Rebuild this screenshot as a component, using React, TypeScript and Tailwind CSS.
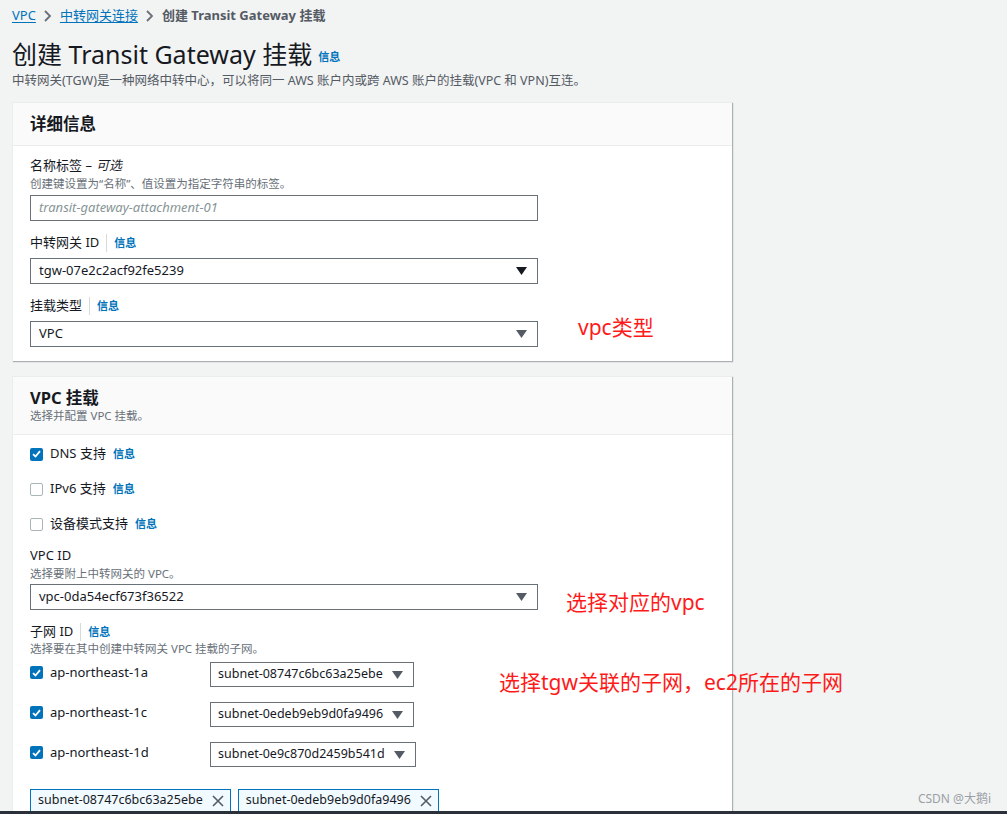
import React from "react";

const font = { fontFamily: '"Noto Sans", "Noto Sans CJK SC", sans-serif' };

//small blue "信息" link
const Info = ({ bar = false }: { bar?: boolean }) => (
  <span className="flex items-center">
    {bar && <span className="mx-[7px] h-[18px] w-px bg-[#d5dbdb]" />}
    <span className="text-[11px] font-bold text-[#0073bb]">信息</span>
  </span>
);

const Caret = ({ dark = false }: { dark?: boolean }) => (
  <svg width="11" height="8" viewBox="0 0 11 8" className="shrink-0">
    <path d="M0 0 L11 0 L5.5 8 Z" fill={dark ? "#16191f" : "#545b64"} />
  </svg>
);

const Select = ({ value, dark = false }: { value: string; dark?: boolean }) => (
  <div className="flex h-[26px] w-[508px] items-center justify-between border border-[#687078] bg-white pl-[8px] pr-[10px] text-[13px] text-[#16191f]">
    <span>{value}</span>
    <Caret dark={dark} />
  </div>
);

const SmallSelect = ({ value }: { value: string }) => (
  <div className="flex h-[25px] items-center gap-[9px] border border-[#687078] bg-white pl-[7px] pr-[10px] text-[12.5px] text-[#16191f]">
    <span>{value}</span>
    <Caret />
  </div>
);

const Checkbox = ({ checked }: { checked: boolean }) =>
  checked ? (
    <span className="flex h-[13px] w-[13px] shrink-0 items-center justify-center rounded-[2px] bg-[#0073bb]">
      <svg width="9" height="8" viewBox="0 0 9 8">
        <path d="M1 4.2 L3.5 6.5 L8 1.2" stroke="white" strokeWidth="1.8" fill="none" />
      </svg>
    </span>
  ) : (
    <span className="h-[13px] w-[13px] shrink-0 rounded-[2px] border border-[#aab7b8] bg-white" />
  );

const Label = ({ children }: { children: React.ReactNode }) => (
  <div className="flex h-[20px] items-center text-[13px] text-[#16191f]">{children}</div>
);

const Desc = ({ children }: { children: React.ReactNode }) => (
  <div className="text-[11.5px] leading-[16px] text-[#687078]">{children}</div>
);

const Note = ({ children, className }: { children: React.ReactNode; className: string }) => (
  <div className={`absolute whitespace-nowrap text-[21px] leading-[26px] text-[#ff1a1a] ${className}`}>
    {children}
  </div>
);

const subnets = [
  { az: "ap-northeast-1a", id: "subnet-08747c6bc63a25ebe" },
  { az: "ap-northeast-1c", id: "subnet-0edeb9eb9d0fa9496" },
  { az: "ap-northeast-1d", id: "subnet-0e9c870d2459b541d" },
];

const Token = ({ id }: { id: string }) => (
  <div className="flex h-[23px] items-center gap-[9px] border border-[#0073bb] bg-[#f1faff] pl-[7px] pr-[6px] text-[12.5px] text-[#16191f]">
    <span>{id}</span>
    <svg width="12" height="12" viewBox="0 0 12 12">
      <path d="M1 1 L11 11 M11 1 L1 11" stroke="#545b64" strokeWidth="1.6" />
    </svg>
  </div>
);

const Chevron = () => (
  <svg width="24" height="14" viewBox="0 0 24 14">
    <path d="M9 2 L14 7 L9 12" stroke="#687078" strokeWidth="1.8" fill="none" />
  </svg>
);

export default function App() {
  return (
    <div style={font} className="relative flex h-[814px] flex-col overflow-hidden bg-[#f2f3f3]">
      <div className="flex-1 overflow-hidden pl-[12px]">
        {/* breadcrumb */}
        <div className="flex h-[32px] items-center text-[13px]">
          <span className="text-[#0073bb] underline underline-offset-2">VPC</span>
          <Chevron />
          <span className="text-[#0073bb] underline underline-offset-2">中转网关连接</span>
          <Chevron />
          <span className="font-bold text-[#545b64]">创建 Transit Gateway 挂载</span>
        </div>

        <div className="mt-[6px] flex h-[32px] items-center gap-[6px]">
          <h1 className="text-[25px] leading-[32px] text-[#16191f]">创建 Transit Gateway 挂载</h1>
          <span className="mt-[6px] text-[11px] font-bold text-[#0073bb]">信息</span>
        </div>
        <div className="mt-[2px] text-[12.5px] leading-[18px] text-[#545b64]">
          中转网关(TGW)是一种网络中转中心，可以将同一 AWS 账户内或跨 AWS 账户的挂载(VPC 和 VPN)互连。
        </div>

        {/* details panel */}
        <div className="relative mt-[12px] w-[720px] border-t border-l border-[#eaeded] bg-white shadow-[1px_1px_1px_0_rgba(0,28,36,0.3)]">
          <div className="flex h-[43px] items-center border-b border-[#eaeded] bg-[#fafafa] px-[17px]">
            <h2 className="text-[16.5px] font-bold text-[#16191f]">详细信息</h2>
          </div>
          <div className="px-[17px] pb-[14px] pt-[10px]">
            <Label>
              名称标签 – <i className="ml-[4px]">可选</i>
            </Label>
            <Desc>创建键设置为“名称”、值设置为指定字符串的标签。</Desc>
            <div className="mt-[3px] flex h-[26px] w-[508px] items-center border border-[#687078] pl-[8px] text-[13px] italic text-[#879596]">
              transit-gateway-attachment-01
            </div>

            <div className="mt-[12px]">
              <Label>
                中转网关 ID
                <Info bar />
              </Label>
            </div>
            <div className="mt-[5px]">
              <Select value="tgw-07e2c2acf92fe5239" dark />
            </div>

            <div className="mt-[12px]">
              <Label>
                挂载类型
                <Info bar />
              </Label>
            </div>
            <div className="mt-[5px]">
              <Select value="VPC" />
            </div>
          </div>
          <Note className="left-[565px] top-[211px]">vpc类型</Note>
        </div>

        {/* vpc attachment panel */}
        <div className="relative mt-[15px] w-[720px] border-t border-l border-[#eaeded] bg-white shadow-[1px_1px_1px_0_rgba(0,28,36,0.3)]">
          <div className="border-b border-[#eaeded] bg-[#fafafa] px-[17px] pb-[11px] pt-[10px]">
            <h2 className="text-[16.5px] font-bold leading-[22px] text-[#16191f]">VPC 挂载</h2>
            <div className="text-[11.5px] leading-[14px] text-[#687078]">选择并配置 VPC 挂载。</div>
          </div>
          <div className="px-[17px] pt-[9px]">
            <div className="flex flex-col gap-[15px]">
              <div className="flex h-[20px] items-center gap-[7px] text-[13px] text-[#16191f]">
                <Checkbox checked />
                <span>DNS 支持</span>
                <span className="text-[11px] font-bold text-[#0073bb]">信息</span>
              </div>
              <div className="flex h-[20px] items-center gap-[7px] text-[13px] text-[#16191f]">
                <Checkbox checked={false} />
                <span>IPv6 支持</span>
                <span className="text-[11px] font-bold text-[#0073bb]">信息</span>
              </div>
              <div className="flex h-[20px] items-center gap-[7px] text-[13px] text-[#16191f]">
                <Checkbox checked={false} />
                <span>设备模式支持</span>
                <span className="text-[11px] font-bold text-[#0073bb]">信息</span>
              </div>
            </div>

            <div className="mt-[12px]">
              <Label>VPC ID</Label>
            </div>
            <Desc>选择要附上中转网关的 VPC。</Desc>
            <div className="mt-[2px]">
              <Select value="vpc-0da54ecf673f36522" />
            </div>

            <div className="mt-[12px]">
              <Label>
                子网 ID
                <Info bar />
              </Label>
            </div>
            <div className="text-[11.5px] leading-[14px] text-[#687078]">选择要在其中创建中转网关 VPC 挂载的子网。</div>

            <div className="mt-[6px] flex flex-col gap-[15px]">
              {subnets.map((s) => (
                <div key={s.az} className="flex items-start">
                  <div className="flex w-[180px] items-center gap-[7px] pt-[1px] text-[13px] text-[#16191f]">
                    <Checkbox checked />
                    <span>{s.az}</span>
                  </div>
                  <SmallSelect value={s.id} />
                </div>
              ))}
            </div>

            <div className="mt-[22px] flex gap-[7px]">
              <Token id={subnets[0].id} />
              <Token id={subnets[1].id} />
            </div>
          </div>
          <Note className="left-[553px] top-[212px]">选择对应的vpc</Note>
          <Note className="left-[486px] top-[292px]">选择tgw关联的子网，ec2所在的子网</Note>
        </div>
      </div>

      <div className="absolute bottom-[6px] right-[16px] text-[12px] text-[#9aa0a6]">CSDN @大鹅i</div>
      <div className="h-[3px] shrink-0 bg-[#2a313a]" />
    </div>
  );
}
